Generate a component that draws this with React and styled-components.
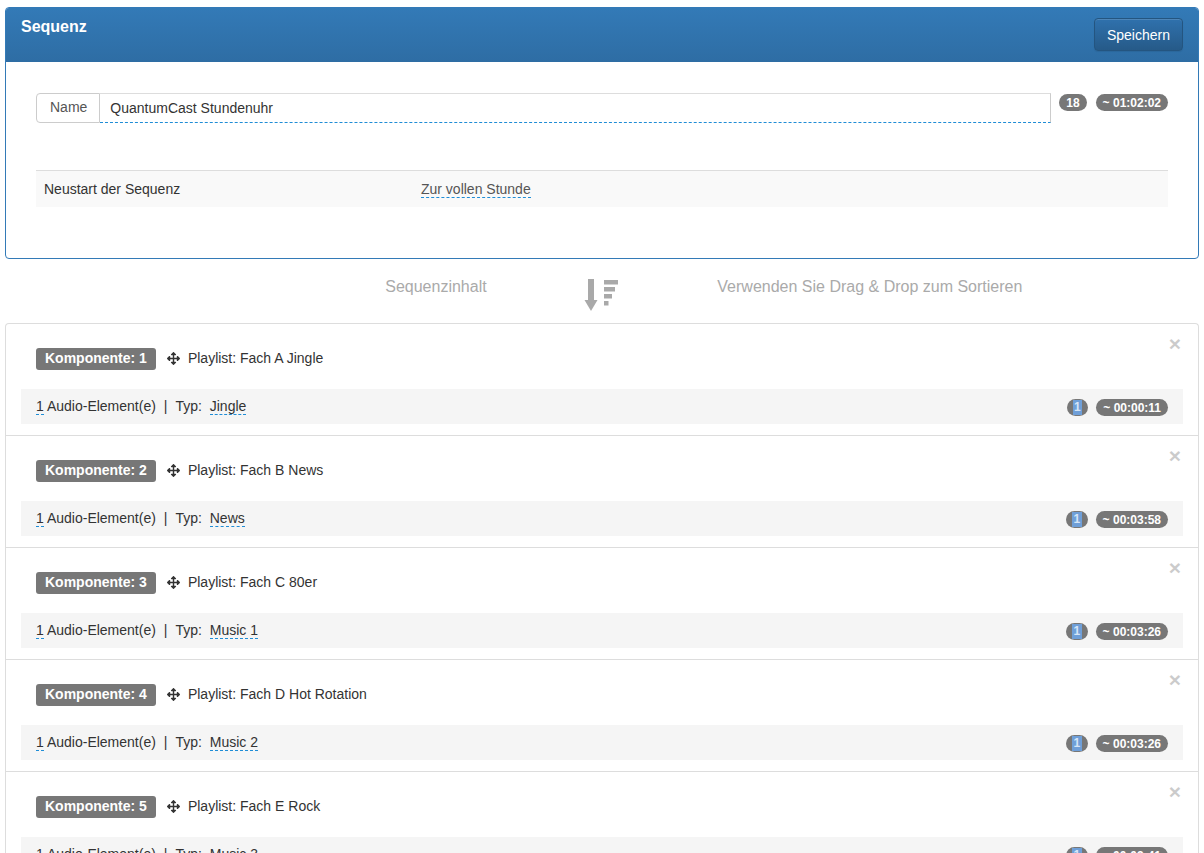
import React from "react";
import styled, { createGlobalStyle } from "styled-components";
import { FaArrowsAlt } from "react-icons/fa";

const GlobalStyle = createGlobalStyle`
  html, body { margin: 0; padding: 0; background: #fff; }
  body {
    font-family: "Liberation Sans", Arial, sans-serif;
    font-size: 14px;
    line-height: 1.42857;
    color: #333;
  }
  * { box-sizing: border-box; }
`;

const Page = styled.div`
  padding: 7px 5px 0;
`;

const Panel = styled.section`
  border: 1px solid #337ab7;
  border-radius: 4px;
  background: #fff;
`;

const PanelHeading = styled.header`
  display: flex;
  justify-content: space-between;
  align-items: flex-start;
  padding: 10px 15px 11px;
  background: linear-gradient(to bottom, #337ab7 0%, #2e6da4 100%);
  border-radius: 3px 3px 0 0;
`;

const PanelTitle = styled.h3`
  margin: 0;
  font-size: 16px;
  font-weight: bold;
  line-height: 1.1;
  color: #fff;
`;

const PrimaryButton = styled.button`
  height: 33px;
  padding: 0 12px;
  font-family: inherit;
  font-size: 14px;
  color: #fff;
  border: 1px solid #245580;
  border-radius: 4px;
  background: linear-gradient(to bottom, #2f71ad 0%, #265a88 100%);
  box-shadow: inset 0 1px 0 rgba(255, 255, 255, 0.15), 0 1px 1px rgba(0, 0, 0, 0.075);
  cursor: pointer;
`;

const PanelBody = styled.div`
  padding: 31px 30px 51px;
`;

const NameRow = styled.div`
  display: flex;
  align-items: flex-start;
  gap: 8px;
`;

const InputGroup = styled.div`
  flex: 1;
  display: flex;
  height: 30px;
`;

const Addon = styled.span`
  display: flex;
  align-items: center;
  padding: 0 12px 0 13px;
  color: #555;
  border: 1px solid #ccc;
  border-radius: 4px 0 0 4px;
  background: #fff;
`;

const NameInput = styled.div`
  flex: 1;
  display: flex;
  align-items: center;
  padding: 2px 10px 0;
  border-top: 1px solid #ddd;
  border-right: 1px solid #ccc;
  border-bottom: 1px dashed #1f8dd6;
  color: #333;
`;

const Badges = styled.div`
  display: flex;
  gap: ${(p) => p.$gap || 9}px;
  margin-top: 1px;
`;

const Badge = styled.span`
  display: inline-flex;
  align-items: center;
  height: 17px;
  padding: 0 ${(p) => (p.$compact ? 6 : 7)}px;
  font-size: 12px;
  font-weight: bold;
  line-height: 1;
  color: #fff;
  background: #777;
  border-radius: 10px;
  white-space: nowrap;
`;

const Highlight = styled.span`
  display: inline-block;
  padding: 0 1.5px;
  height: 15px;
  line-height: 15px;
  background: #6f9fd8;
  color: #d5e5f7;
`;

const SettingsTable = styled.table`
  width: 100%;
  margin-top: 47px;
  border-collapse: collapse;
`;

const Row = styled.tr`
  background: #f9f9f9;
`;

const Cell = styled.td`
  width: 33.3%;
  padding: 9px 8px 7px;
  border-top: 1px solid #ddd;
  color: #333;
  &:last-child { width: auto; }
`;

const Editable = styled.span`
  border-bottom: 1px dashed #1f8dd6;
  color: ${(p) => p.$color || "#555"};
`;

const Separator = styled.div`
  display: grid;
  grid-template-columns: 5fr 2fr 5fr;
  height: 64px;
  padding-top: 17px;
  margin: 0 -5px;
  color: #aaa;
  font-size: 16px;
`;

const SepText = styled.div`
  padding: 0 15px;
  text-align: ${(p) => p.$align};
`;

const SepIcon = styled.div`
  display: flex;
  justify-content: center;
  padding-top: 1px;
`;

const List = styled.div`
  border: 1px solid #ddd;
  border-radius: 4px;
  border-bottom: none;
`;

const Item = styled.div`
  padding: 24px 15px 11px;
  border-bottom: 1px solid #ddd;
`;

const ItemHeader = styled.div`
  display: flex;
  align-items: center;
  height: 22px;
  padding-left: 15px;
`;

const Label = styled.span`
  display: inline-flex;
  align-items: center;
  height: 22px;
  padding: 1px 9px 0;
  font-size: 14px;
  font-weight: bold;
  color: #fff;
  background: #777;
  border-radius: 3px;
`;

const MoveIcon = styled.span`
  display: inline-flex;
  margin: 0 8px 0 11px;
  color: #333;
`;

const Title = styled.span`
  padding-top: 1px;
`;

const Close = styled.span`
  align-self: flex-start;
  margin-left: auto;
  margin-top: -15px;
  margin-right: 2px;
  font-size: 21px;
  font-weight: bold;
  line-height: 1;
  color: #000;
  opacity: 0.2;
`;

const Detail = styled.div`
  display: flex;
  align-items: center;
  justify-content: space-between;
  height: 35px;
  margin-top: 19px;
  padding: 2px 15px 0 15px;
  background: #f5f5f5;
`;

const DetailText = styled.div`
  color: #333;
  white-space: pre;
`;

const Sep = styled.span`
  margin: 0 8px;
`;

const SortIcon = () => (
  <svg width="36" height="36" viewBox="0 0 36 36" fill="#a9a9a9">
    <rect x="4" y="2" width="6" height="22" />
    <polygon points="0.5,23 13.5,23 7,34" />
    <rect x="20" y="3" width="14" height="4.5" />
    <rect x="20" y="10" width="11" height="4.5" />
    <rect x="20" y="17" width="8" height="4.5" />
    <rect x="20" y="24" width="4.5" height="4.5" />
  </svg>
);

const items = [
  { n: 1, playlist: "Fach A Jingle", typ: "Jingle", time: "00:00:11" },
  { n: 2, playlist: "Fach B News", typ: "News", time: "00:03:58" },
  { n: 3, playlist: "Fach C 80er", typ: "Music 1", time: "00:03:26" },
  { n: 4, playlist: "Fach D Hot Rotation", typ: "Music 2", time: "00:03:26" },
  { n: 5, playlist: "Fach E Rock", typ: "Music 3", time: "00:03:41" },
];

export default function App() {
  return (
    <Page>
      <GlobalStyle />
      <Panel>
        <PanelHeading>
          <PanelTitle>Sequenz</PanelTitle>
          <PrimaryButton>Speichern</PrimaryButton>
        </PanelHeading>
        <PanelBody>
          <NameRow>
            <InputGroup>
              <Addon>Name</Addon>
              <NameInput>QuantumCast Stundenuhr</NameInput>
            </InputGroup>
            <Badges>
              <Badge>18</Badge>
              <Badge>~ 01:02:02</Badge>
            </Badges>
          </NameRow>
          <SettingsTable>
            <tbody>
              <Row>
                <Cell>Neustart der Sequenz</Cell>
                <Cell>
                  <Editable>Zur vollen Stunde</Editable>
                </Cell>
              </Row>
            </tbody>
          </SettingsTable>
        </PanelBody>
      </Panel>

      <Separator>
        <SepText $align="right">Sequenzinhalt</SepText>
        <SepIcon>
          <SortIcon />
        </SepIcon>
        <SepText $align="left">Verwenden Sie Drag &amp; Drop zum Sortieren</SepText>
      </Separator>

      <List>
        {items.map((it) => (
          <Item key={it.n}>
            <ItemHeader>
              <Label>Komponente: {it.n}</Label>
              <MoveIcon>
                <FaArrowsAlt size={13} />
              </MoveIcon>
              <Title>Playlist: {it.playlist}</Title>
              <Close>×</Close>
            </ItemHeader>
            <Detail>
              <DetailText>
                <Editable $color="#333">1</Editable> Audio-Element(e)
                <Sep>|</Sep>Typ:{"  "}
                <Editable $color="#333">{it.typ}</Editable>
              </DetailText>
              <Badges $gap={8}>
                <Badge $compact>
                  <Highlight>1</Highlight>
                </Badge>
                <Badge>~ {it.time}</Badge>
              </Badges>
            </Detail>
          </Item>
        ))}
      </List>
    </Page>
  );
}
